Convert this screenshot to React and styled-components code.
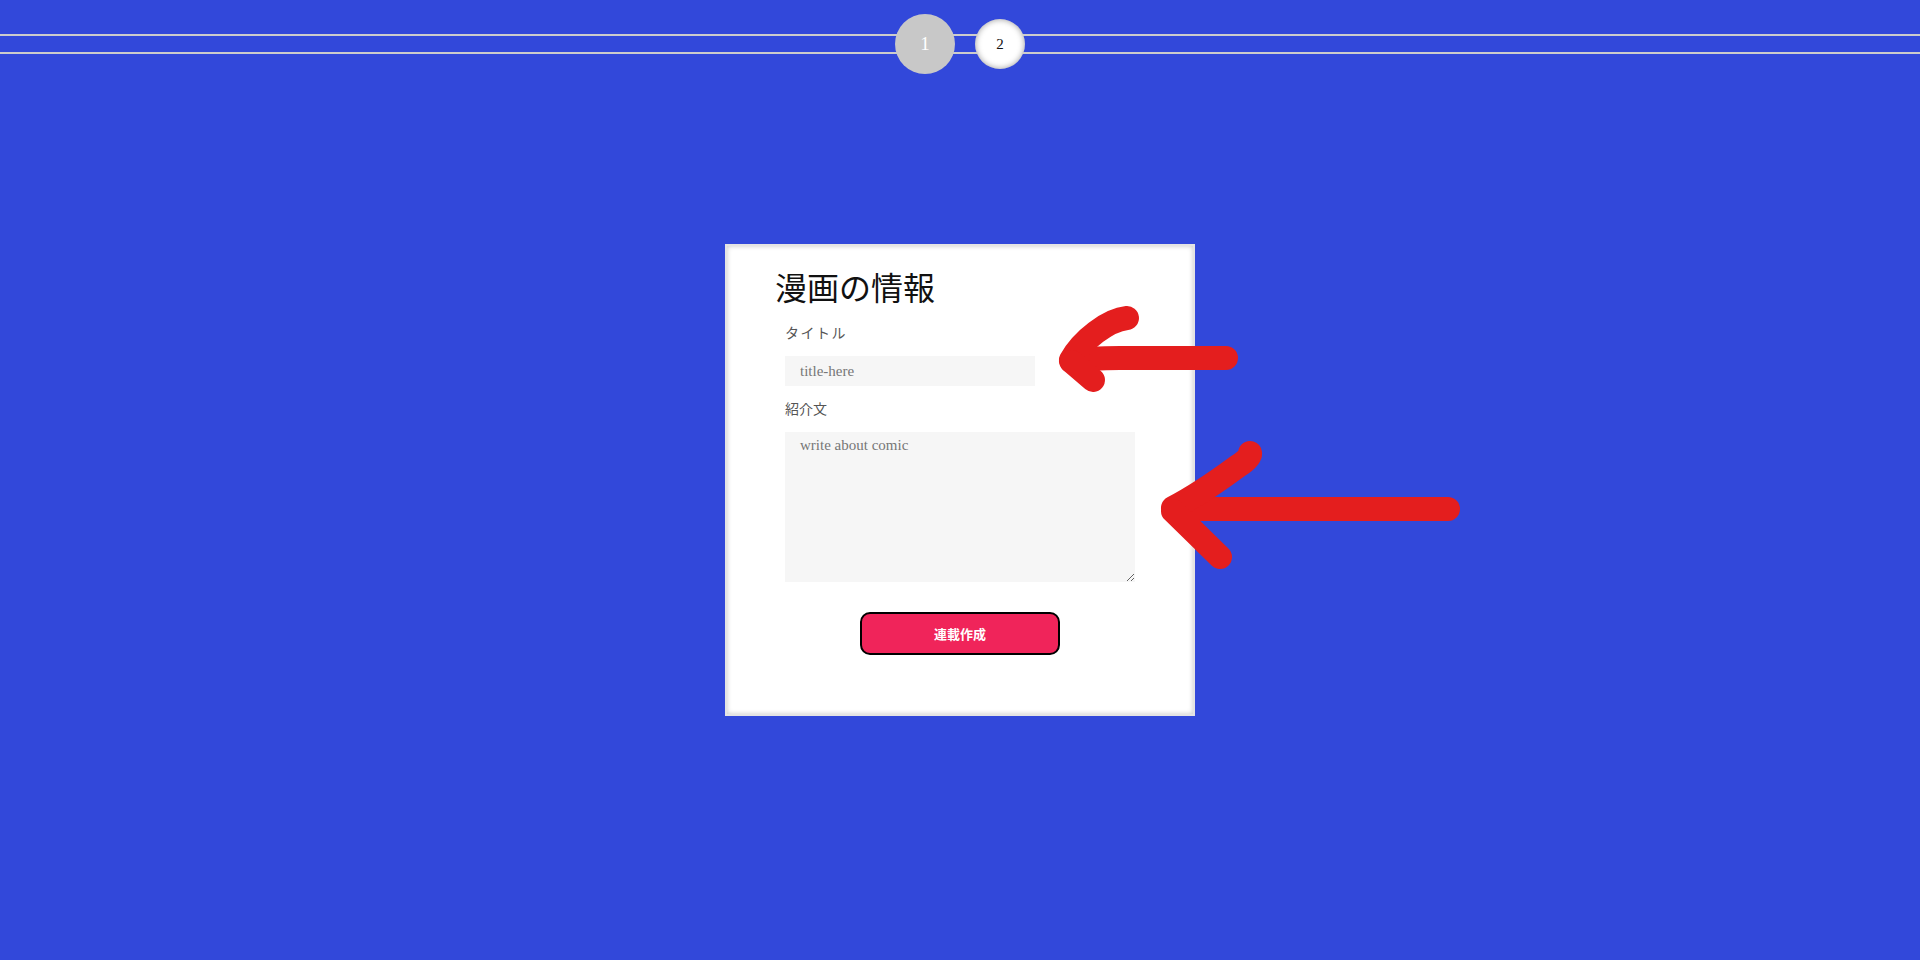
import React from "react";
import styled, { createGlobalStyle } from "styled-components";

const Global = createGlobalStyle`
  html, body { margin: 0; padding: 0; }
  body {
    background: #3248da;
    font-family: "Liberation Serif", "Noto Sans CJK JP", serif;
  }
`;

const Page = styled.div`
  position: relative;
  min-height: 960px;
  overflow: hidden;
`;

const StepBar = styled.div`
  margin-top: 34px;
  height: 16px;
  border-top: 2px solid #cccccc;
  border-bottom: 2px solid #cccccc;
  display: flex;
  justify-content: center;
  align-items: center;
  gap: 20px;
`;

const Step = styled.div`
  flex: none;
  width: ${(p) => (p.$active ? 60 : 50)}px;
  height: ${(p) => (p.$active ? 60 : 50)}px;
  border-radius: 50%;
  display: flex;
  align-items: center;
  justify-content: center;
  background: ${(p) => (p.$active ? "#c8c8c8" : "#ffffff")};
  color: ${(p) => (p.$active ? "#ffffff" : "#111111")};
  box-shadow: ${(p) => (p.$active ? "none" : "inset 0 0 6px rgba(0,0,0,0.4)")};
  font-family: "Liberation Serif", serif;
  font-size: ${(p) => (p.$active ? 19 : 15)}px;
  position: relative;
  z-index: 1;
`;

const Main = styled.main`
  display: flex;
  justify-content: center;
  padding-top: 190px;
`;

const Card = styled.section`
  box-sizing: border-box;
  width: 470px;
  height: 472px;
  background: #ffffff;
  border: 2px solid #e4e4e4;
  box-shadow: inset 0 0 5px rgba(0, 0, 0, 0.22);
  padding: 24px 50px 0 48px;
`;

const Title = styled.h1`
  margin: 0 0 20px;
  font-family: "Noto Sans CJK JP", serif;
  font-weight: 400;
  font-size: 32px;
  line-height: 32px;
  color: #111;
`;

const Form = styled.form`
  display: flex;
  flex-direction: column;
  align-items: flex-start;
  padding-left: 10px;
`;

const Label = styled.label`
  display: block;
  font-family: "Noto Sans CJK JP", serif;
  font-size: 14px;
  line-height: 20px;
  color: #555;
  letter-spacing: ${(p) => (p.$spaced ? "1.5px" : "0")};
  margin: ${(p) => p.$mt || 0}px 0 14px;
`;

const TextInput = styled.input`
  box-sizing: border-box;
  width: 250px;
  height: 30px;
  border: none;
  outline: none;
  background: #f6f6f6;
  padding: 0 15px;
  font-family: "Liberation Serif", "Noto Sans CJK JP", serif;
  font-size: 15px;
  color: #333;
  &::placeholder { color: #777; }
`;

const TextArea = styled.textarea`
  box-sizing: border-box;
  width: 350px;
  height: 150px;
  border: none;
  outline: none;
  background: #f6f6f6;
  padding: 5px 15px;
  font-family: "Liberation Serif", "Noto Sans CJK JP", serif;
  font-size: 15px;
  color: #333;
  &::placeholder { color: #777; }
`;

const ButtonRow = styled.div`
  align-self: stretch;
  display: flex;
  justify-content: center;
  margin-top: 30px;
  padding-right: 8px;
`;

const SubmitButton = styled.button`
  box-sizing: border-box;
  width: 200px;
  height: 43px;
  background: #f0245a;
  border: 2px solid #000;
  border-radius: 10px;
  color: #fff;
  font-family: "Noto Sans CJK JP", serif;
  font-weight: 700;
  font-size: 13px;
  cursor: pointer;
`;

const Overlay = styled.svg`
  position: absolute;
  left: 0;
  top: 0;
  width: 1920px;
  height: 960px;
  pointer-events: none;
`;

export default function App() {
  return (
    <Page>
      <Global />
      <StepBar>
        <Step $active>1</Step>
        <Step>2</Step>
      </StepBar>
      <Main>
        <Card>
          <Title>漫画の情報</Title>
          <Form onSubmit={(e) => e.preventDefault()}>
            <Label htmlFor="title" $spaced>タイトル</Label>
            <TextInput id="title" placeholder="title-here" />
            <Label htmlFor="about" $mt={12}>紹介文</Label>
            <TextArea id="about" placeholder="write about comic" />
            <ButtonRow>
              <SubmitButton type="submit">連載作成</SubmitButton>
            </ButtonRow>
          </Form>
        </Card>
      </Main>
      <Overlay viewBox="0 0 1920 960">
        <g fill="none" stroke="#e41e1e" strokeWidth="24" strokeLinecap="round" strokeLinejoin="round">
          <path d="M1226 358 L1120 358 Q1090 358 1071 361" />
          <path d="M1071 360 C1082 340 1108 320 1127 318" />
          <path d="M1072 362 L1093 380" />
          <path d="M1448 509 L1175 509" />
          <path d="M1173 508 Q1200 494 1238 466 Q1251 458 1250 453" />
          <path d="M1173 511 L1220 557" />
        </g>
      </Overlay>
    </Page>
  );
}
